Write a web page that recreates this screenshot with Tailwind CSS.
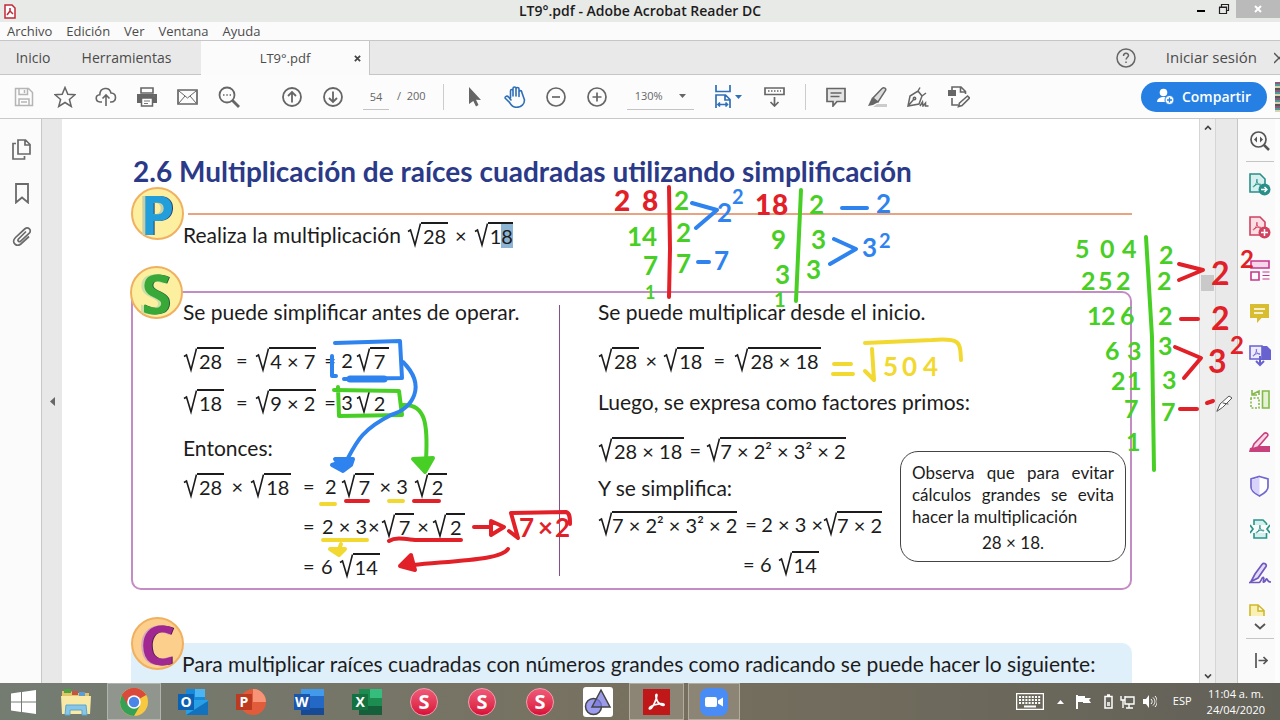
<!DOCTYPE html>
<html lang="es">
<head>
<meta charset="utf-8">
<title>LT9°.pdf - Adobe Acrobat Reader DC</title>
<script src="https://cdn.jsdelivr.net/npm/@tailwindcss/browser@4"></script>
</head>
<body class="h-screen overflow-hidden bg-[#fbfbfb] font-['Open_Sans','Noto_Sans',sans-serif] text-[#4b4b4b]">
<svg class="hidden">
  <symbol id="rad" viewBox="0 0 14 26"><path d="M1 9.500l2.500-1.500L8 23 13.500 1.500" fill="none" stroke="#1c1c1c" stroke-width="1.600"/></symbol>
  <symbol id="pdfa" viewBox="0 0 12 12"><path d="M6 1.500C5 1.500 6 5 7 6.500S10.500 9 10.800 8 5 7 2 9.500C.5 11 2.500 11.500 4 8.500S6.800 1.500 6 1.500z" fill="none" stroke="currentColor" stroke-width="1.100"/></symbol>
</svg>

<div class="relative flex h-screen flex-col">
  <header class="shrink-0">
    <div class="flex h-[22px] items-center bg-[#e8eae8]">
      <div class="flex w-[89px] pl-1">
        <svg class="h-[15px] w-3 text-[#c22838]" viewBox="0 0 12 15" fill="none" stroke="currentColor"><path d="M1 1h7l3 3v10H1z" fill="#fff" stroke-width="1.500"/><path d="M6 4v3l3 3M6 7l-3 4" stroke-width="1.500"/></svg>
      </div>
      <h1 class="flex-1 text-center text-[14px] font-semibold leading-[22px] text-[#1c1c1c]">LT9°.pdf - Adobe Acrobat Reader DC</h1>
      <div class="flex w-[89px] items-start self-stretch">
        <button aria-label="Minimizar" class="flex h-[18px] w-5 items-center justify-center"><span class="mt-1 h-[2px] w-2 bg-black"></span></button>
        <button aria-label="Restaurar" class="flex h-[18px] w-[25px] items-center justify-center"><svg class="size-3" viewBox="0 0 12 12" fill="none" stroke="#222"><path d="M1.500 4.500h7v6h-7zM3.500 4V1.500h7v6H9M1 4h8" stroke-width="1.200"/></svg></button>
        <button aria-label="Cerrar" class="flex h-[18px] flex-1 items-center justify-center bg-[#b9bab9]"><svg class="size-2" viewBox="0 0 8 8" stroke="#fff" stroke-width="2"><path d="M1 1l6 6M7 1L1 7"/></svg></button>
      </div>
    </div>
    <nav class="flex h-[18px] items-center gap-[14px] bg-[#fbfbfb] pl-[7px] text-[13px] leading-[18px]">
      <a href="#">Archivo</a><a href="#">Edición</a><a href="#">Ver</a><a href="#">Ventana</a><a href="#">Ayuda</a>
    </nav>
    <div class="flex h-[35px] border-y border-[#c6c6c6] bg-[#e9e9e9] text-sm leading-[33px]">
      <a href="#" class="w-[66px] text-center">Inicio</a>
      <a href="#" class="w-[121px] text-center">Herramientas</a>
      <div class="ml-[14px] -mb-px flex w-[169px] items-center border-r border-[#c6c6c6] bg-[#fbfbfb] text-[13px]">
        <span class="flex-1 text-center">LT9°.pdf</span>
        <button aria-label="Cerrar pestaña" class="-ml-5 mr-1 flex size-4 items-center justify-center"><svg class="size-[7px]" viewBox="0 0 8 8" stroke="#444" stroke-width="2"><path d="M1 1l6 6M7 1L1 7"/></svg></button>
      </div>
      <div class="ml-auto flex items-center">
        <svg class="size-5" viewBox="0 0 20 20" fill="none" stroke="#666" stroke-width="1.500"><circle cx="10" cy="10" r="9"/><path d="M7.500 8c0-3.500 5-3.500 5-.5 0 1.500-2.400 2-2.400 4M10 13.500v1.500"/></svg>
        <a href="#" class="ml-[30px] mr-[17px] text-[15px]">Iniciar sesión</a>
        <svg class="h-3 w-[6px]" viewBox="0 0 6 12" stroke="#555" stroke-width="1.500"><path d="M0 1l6 6M0 11l6-6"/></svg>
      </div>
    </div>
    <div class="flex h-[44px] items-center border-b border-[#c9c9c9] bg-[#fcfcfc] pl-[3px] text-[#666]">
      <button aria-label="Guardar" class="flex w-[41px] justify-center text-[#b5b5b5]"><svg class="size-5" viewBox="0 0 20 20" fill="none" stroke="currentColor" stroke-width="1.500"><path d="M1.500 1.500h13l4 4v13h-17zM5 1.500v6h8.500v-6M10.500 3v3M5 18.500v-6.500h10v6.500M7 15h6"/></svg></button>
      <button aria-label="Destacar" class="flex w-[41px] justify-center"><svg class="size-[22px]" viewBox="0 0 22 22" fill="none" stroke="currentColor" stroke-width="1.500"><path d="M11 1.500l2.800 6.800 7.200.4-5.600 4.700 1.900 7.100L11 16.500l-6.300 4 1.900-7.100L1 8.700l7.200-.4z"/></svg></button>
      <button aria-label="Subir" class="flex w-[41px] justify-center"><svg class="size-[22px]" viewBox="0 0 22 22" fill="none" stroke="currentColor" stroke-width="1.600"><path d="M7 16H5C0 15.500 0 9 4.800 8.700 5 1 14.500.5 16 7c6 .2 6 8.700 0 9h-1M11 20V9M7.500 12.500L11 9l3.500 3.500"/></svg></button>
      <button aria-label="Imprimir" class="flex w-[41px] justify-center"><svg class="size-5" viewBox="0 0 20 20"><path d="M4 1h12v5H4z" fill="none" stroke="currentColor" stroke-width="1.600"/><path d="M0 7h20v9H0z" fill="currentColor"/><path d="M4.500 11h11v8h-11z" fill="#fff" stroke="currentColor" stroke-width="1.500"/><path d="M7 14h6M7 16.500h4M16 9h2" stroke="#777"/></svg></button>
      <button aria-label="Correo" class="flex w-[41px] justify-center"><svg class="h-4 w-[21px]" viewBox="0 0 21 16" fill="none" stroke="currentColor"><path d="M1 1h19v14H1z" stroke-width="1.700"/><path d="M2 2l8.500 7L19 2M2 14l6-7M19 14l-6-7"/></svg></button>
      <button aria-label="Buscar" class="flex w-[41px] justify-center"><svg class="size-[22px]" viewBox="0 0 22 22" fill="none" stroke="currentColor" stroke-width="1.800"><circle cx="9" cy="9" r="7.500"/><path d="M14.500 14.500l6.500 6.500" stroke-width="2.800"/><path d="M5 9h8" stroke-width="1.500" stroke-dasharray="1.500 1.800"/></svg></button>
      <button aria-label="Página anterior" class="ml-[22px] flex w-[41px] justify-center"><svg class="size-5" viewBox="0 0 20 20" fill="none" stroke="currentColor" stroke-width="1.800"><circle cx="10" cy="10" r="9"/><path d="M10 15.500V5M6 9l4-4 4 4"/></svg></button>
      <button aria-label="Página siguiente" class="flex w-[41px] justify-center"><svg class="size-5" viewBox="0 0 20 20" fill="none" stroke="currentColor" stroke-width="1.800"><circle cx="10" cy="10" r="9"/><path d="M10 4.500V15M6 11l4 4 4-4"/></svg></button>
      <input aria-label="Página" value="54" class="ml-[10px] h-[26px] w-[26px] border-b border-[#c4c4c4] text-center text-[11px]">
      <span class="ml-2 text-[11px]">/&nbsp; 200</span>
      <span class="ml-[17px] mr-[10px] h-[26px] w-px bg-[#ccc]"></span>
      <button aria-label="Seleccionar" class="flex w-[41px] justify-center"><svg class="h-5 w-[13px]" viewBox="0 0 13 20"><path d="M1 0l12 13-5-.3 2.500 5.300-2.500 1.500-2.700-5.500L1 17z" fill="currentColor"/></svg></button>
      <button aria-label="Mano" class="flex w-[41px] justify-center text-[#2f6fb8]"><svg class="size-[22px]" viewBox="0 0 22 22" fill="none" stroke="currentColor" stroke-width="1.600" stroke-linecap="round" stroke-linejoin="round"><path d="M6.500 12V5c0-2 2.500-2 2.500 0v5V2.500c0-2 3-2 3 0V10 3c0-2 3-2 3 0v7.500V6c0-1.800 2.700-1.800 2.700 0L20.500 14c0 4-3 7.300-8 7.300-4 0-5.500-2.300-7-5L1 12c0-2 2.300-2.500 3.500-1L7 14"/></svg></button>
      <button aria-label="Alejar" class="flex w-[41px] justify-center"><svg class="size-5" viewBox="0 0 20 20" fill="none" stroke="currentColor" stroke-width="1.700"><circle cx="10" cy="10" r="9"/><path d="M6 10h8"/></svg></button>
      <button aria-label="Acercar" class="flex w-[41px] justify-center"><svg class="size-5" viewBox="0 0 20 20" fill="none" stroke="currentColor" stroke-width="1.700"><circle cx="10" cy="10" r="9"/><path d="M5.500 10h9M10 5.500v9"/></svg></button>
      <div class="ml-[9px] flex h-[26px] w-[67px] items-center border-b border-[#c4c4c4] pl-[8px]">
        <select aria-label="Zoom" class="w-[44px] appearance-none text-[11px]"><option>130%</option></select>
        <svg class="h-1 w-[7px]" viewBox="0 0 7 4"><path d="M0 0h7L3.500 4z" fill="currentColor"/></svg>
      </div>
      <button aria-label="Ajustar" class="ml-5 flex items-center gap-[3px] text-[#2f6fb8]"><svg class="h-[23px] w-[18px]" viewBox="0 0 18 23" fill="none" stroke="currentColor" stroke-width="1.700"><path d="M2 0v6.500h14V0M2 23V10h9.500l4.500 4.500V23M11 10v5h5M4 19.500h9M6 17.500l-2 2 2 2M11.500 17.500l2 2-2 2"/></svg><svg class="h-1 w-[7px]" viewBox="0 0 7 4"><path d="M0 0h7L3.500 4z" fill="currentColor"/></svg></button>
      <button aria-label="Medir" class="ml-3 flex w-[41px] justify-center"><svg class="h-5 w-[21px]" viewBox="0 0 21 20" fill="none" stroke="currentColor" stroke-width="1.700"><path d="M1 1h19v6.500H1zM10.500 10v9M6.500 15l4 4 4-4"/><path d="M4 4h13" stroke-dasharray="1.500 1.500"/></svg></button>
      <span class="mx-[10px] h-[26px] w-px bg-[#ccc]"></span>
      <button aria-label="Comentar" class="flex w-[41px] justify-center"><svg class="size-5" viewBox="0 0 20 20" fill="#e4e4e4" stroke="currentColor" stroke-width="1.700"><path d="M1 1.500h18v13h-8L7 19v-4.500H1zM4.500 6h11M4.500 9.500h9"/></svg></button>
      <button aria-label="Resaltar" class="flex w-[41px] justify-center"><svg class="size-5" viewBox="0 0 20 20"><path d="M10 17h10v3H6z" fill="#ccc"/><path d="M15 1.500c2-1.500 4.500 0 3.500 2L11 15l-5-4z" fill="#ddd" stroke="currentColor" stroke-width="1.500"/><path d="M5 10.500l6.500 4.500L6 18l-5 1z" fill="currentColor"/></svg></button>
      <button aria-label="Firmar" class="flex w-[41px] justify-center"><svg class="h-5 w-[22px]" viewBox="0 0 22 20" fill="none" stroke="currentColor" stroke-width="1.500"><path d="M1 19L3 9l8-5 4 5-3 8zM1 19l6-7M11 4l2-3.500M15 9l4-3M13 19l2.500-4 .5 4 2.500-3v3h3"/><circle cx="7.500" cy="11.500" r="1.200"/></svg></button>
      <button aria-label="Editar" class="flex w-[41px] justify-center"><svg class="size-[22px]" viewBox="0 0 22 22" fill="none" stroke="currentColor" stroke-width="1.600"><path d="M4 4V1h9l4.500 4.500V8M12.500 1v5h5M4 12v7h6"/><path d="M0 4h8v6H0z" fill="currentColor" stroke="none"/><path d="M11.500 17l8-7 2 2-7.500 7.500-3.500 1z"/></svg></button>
      <button class="ml-auto mr-[8px] flex h-[30px] w-[126px] items-center justify-center gap-2 rounded-full bg-[#2680e3] text-sm font-semibold text-white"><svg class="size-[17px]" viewBox="0 0 17 17" fill="#fff"><circle cx="6.500" cy="4.500" r="3.800"/><path d="M0 14c0-3 2-4 5-5h3c1 .3 1 1 1 5z"/><circle cx="12.500" cy="12" r="4.500" stroke="#2680e3"/><path d="M10 12h5M12.500 9.500v5" stroke="#2680e3" stroke-width="1.300"/></svg>Compartir</button>
      <span class="h-[30px] w-[5px] bg-[repeating-linear-gradient(#8a5a7c_0_2px,#4f9a98_2px_4px,#d9d3b0_4px_6px,#555_6px_8px)]"></span>
    </div>
  </header>

  <main class="flex min-h-0 flex-1">
    <aside class="flex w-[42px] shrink-0 flex-col items-center gap-[21px] border-r border-[#c8c8c8] bg-[#fbfbfb] pl-[2px] pt-[19px] text-[#6a6a6a]">
      <button aria-label="Miniaturas" class="flex h-[23px] items-center"><svg class="h-[21px] w-[19px]" viewBox="0 0 19 21" fill="none" stroke="currentColor" stroke-width="1.700"><path d="M6 1h7.500l4.500 4.500V15H6zM13 1v5h5M4 4.500H1V20h11.500v-3"/></svg></button>
      <button aria-label="Marcadores" class="flex h-[23px] items-center"><svg class="h-[21px] w-[14px]" viewBox="0 0 14 21" fill="none" stroke="currentColor" stroke-width="1.800"><path d="M1 1h12v18.500l-6-5-6 5z"/></svg></button>
      <button aria-label="Adjuntos" class="flex h-[20px] items-center"><svg class="size-5" viewBox="0 0 20 20" fill="none" stroke="currentColor" stroke-width="1.700"><path d="M14 5.500l-7.500 7.500c-1.500 1.800.7 3.500 2.200 2.100L17 7.500c3.500-3.500-1-7.500-4.300-4.500L3.500 11.500c-5 5 1.200 10 5.300 6.500L17 10.500"/></svg></button>
    </aside>
    <div class="flex w-5 shrink-0 items-center justify-center bg-[#e8e8e8]"><svg class="h-[9px] w-[5px]" viewBox="0 0 5 9"><path d="M5 0v9L0 4.500z" fill="#666"/></svg></div>

    <article class="min-w-0 flex-1 overflow-hidden bg-white pl-[69px] pr-[67px] pt-[34px] font-['Lato',sans-serif] text-[20px] leading-9 text-[#1c1c1c]">
      <h2 class="whitespace-nowrap pl-[2px] text-[28px] font-bold leading-9 text-[#2b3a88]">2.6 Multiplicación de raíces cuadradas utilizando simplificación</h2>
      <section class="flex h-[76px] items-start">
        <div class="-mt-[2px] flex size-[53px] shrink-0 items-center justify-center rounded-full border-2 border-[#f0b060] bg-[#fcf0a0] font-['Noto_Sans',sans-serif] text-[54px] font-bold leading-none text-[#229fda] [text-shadow:-3px_0_0_#c9cfa5,1px_0_0_#27406a]">P</div>
        <div class="ml-1 mt-[24px] flex-1 border-t-2 border-[#e8a480] pt-[2px]">
          <p class="-ml-[5px] flex h-9 items-center whitespace-nowrap"><span class="text-[21px]">Realiza la multiplicación</span>
            <svg class="ml-[6px] h-[26px] w-[14px]"><use href="#rad"/></svg><span class="-mt-px border-t-2 border-[#1c1c1c] px-[2px] leading-6">28</span>
            <span class="mx-[7px]">×</span>
            <svg class="h-[26px] w-[14px]"><use href="#rad"/></svg><span class="-mt-px border-t-2 border-[#1c1c1c] pl-[2px] leading-6">1<span class="bg-[#8eb4d4]">8</span></span>
          </p>
        </div>
      </section>
      <section class="relative mt-[26px] flex h-[299px] rounded-[10px] border-2 border-[#c48cc4]">
        <div class="absolute -left-[3px] -top-[27px] flex size-[53px] items-center justify-center rounded-full border-2 border-[#f0b060] bg-[#fcf0a0] font-['Noto_Sans',sans-serif] text-[54px] font-bold leading-none text-[#38a838] [text-shadow:-3px_0_0_#c9dfa5,1px_0_0_#22603a]">S</div>
        <div class="w-[426px] shrink-0 pl-[50px] pt-px">
          <p class="h-9 whitespace-nowrap text-[21px]">Se puede simplificar antes de operar.</p>
          <div class="mt-3 flex h-9 items-center">
            <svg class="h-[26px] w-[14px]"><use href="#rad"/></svg><span class="-mt-px border-t-2 border-[#1c1c1c] px-[2px] leading-6">28</span>
            <span class="w-[31px] pl-1 text-center">=</span>
            <svg class="h-[26px] w-[14px]"><use href="#rad"/></svg><span class="-mt-px border-t-2 border-[#1c1c1c] px-px leading-6">4 × 7</span>
            <span class="w-[25px] pl-2">=</span><span class="mr-[3px]">2</span>
            <svg class="h-[26px] w-[14px]"><use href="#rad"/></svg><span class="-mt-px border-t-2 border-[#1c1c1c] px-1 leading-6">7</span>
          </div>
          <div class="mt-[6px] flex h-9 items-center">
            <svg class="h-[26px] w-[14px]"><use href="#rad"/></svg><span class="-mt-px border-t-2 border-[#1c1c1c] px-[2px] leading-6">18</span>
            <span class="w-[31px] pl-1 text-center">=</span>
            <svg class="h-[26px] w-[14px]"><use href="#rad"/></svg><span class="-mt-px border-t-2 border-[#1c1c1c] px-px leading-6">9 × 2</span>
            <span class="w-[25px] pl-2">=</span><span class="mr-[3px]">3</span>
            <svg class="h-[26px] w-[14px]"><use href="#rad"/></svg><span class="-mt-px border-t-2 border-[#1c1c1c] px-1 leading-6">2</span>
          </div>
          <p class="mt-[10px] h-9 text-[21px]">Entonces:</p>
          <div class="mt-[2px] flex h-9 items-center">
            <div class="flex w-[120px] items-center">
              <svg class="h-[26px] w-[14px]"><use href="#rad"/></svg><span class="-mt-px border-t-2 border-[#1c1c1c] px-[2px] leading-6">28</span>
              <span class="w-[26px] text-center">×</span>
              <svg class="h-[26px] w-[14px]"><use href="#rad"/></svg><span class="-mt-px border-t-2 border-[#1c1c1c] px-[2px] leading-6">18</span>
            </div>
            <span class="w-[22px]">=</span><span class="mr-1">2</span>
            <svg class="h-[26px] w-[14px]"><use href="#rad"/></svg><span class="-mt-px border-t-2 border-[#1c1c1c] px-1 leading-6">7</span>
            <span class="w-[22px] text-center">×</span><span class="mr-[6px]">3</span>
            <svg class="h-[26px] w-[14px]"><use href="#rad"/></svg><span class="-mt-px border-t-2 border-[#1c1c1c] px-1 leading-6">2</span>
          </div>
          <div class="mt-1 flex h-9 items-center pl-[120px]">
            <span class="w-[19px]">=</span><span>2 × 3</span><span class="px-px">×</span>
            <svg class="h-[26px] w-[14px]"><use href="#rad"/></svg><span class="-mt-px border-t-2 border-[#1c1c1c] px-1 leading-6">7</span>
            <span class="px-[3px]">×</span>
            <svg class="h-[26px] w-[14px]"><use href="#rad"/></svg><span class="-mt-px border-t-2 border-[#1c1c1c] px-1 leading-6">2</span>
          </div>
          <div class="mt-1 flex h-9 items-center pl-[120px]">
            <span class="w-[18px]">=</span><span class="mr-[6px]">6</span>
            <svg class="h-[26px] w-[14px]"><use href="#rad"/></svg><span class="-mt-px border-t-2 border-[#1c1c1c] px-[2px] leading-6">14</span>
          </div>
        </div>
        <div class="my-3 w-px shrink-0 bg-[#84508c]"></div>
        <div class="min-w-0 flex-1 pl-[38px] pt-px">
          <p class="h-9 whitespace-nowrap text-[21px]">Se puede multiplicar desde el inicio.</p>
          <div class="mt-3 flex h-9 items-center">
            <svg class="h-[26px] w-[14px]"><use href="#rad"/></svg><span class="-mt-px border-t-2 border-[#1c1c1c] px-[2px] leading-6">28</span>
            <span class="w-[24px] text-center">×</span>
            <svg class="h-[26px] w-[14px]"><use href="#rad"/></svg><span class="-mt-px border-t-2 border-[#1c1c1c] px-[2px] leading-6">18</span>
            <span class="w-[30px] text-center">=</span>
            <svg class="h-[26px] w-[14px]"><use href="#rad"/></svg><span class="-mt-px border-t-2 border-[#1c1c1c] px-[2px] leading-6">28 × 18</span>
          </div>
          <p class="mt-[6px] h-9 whitespace-nowrap text-[21px]">Luego, se expresa como factores primos:</p>
          <div class="flex justify-between pr-1">
            <div class="shrink-0">
              <div class="mt-3 flex h-9 items-center">
                <svg class="h-[26px] w-[14px]"><use href="#rad"/></svg><span class="-mt-px border-t-2 border-[#1c1c1c] px-[2px] leading-6">28 × 18</span>
                <span class="w-[22px] text-center">=</span>
                <svg class="h-[26px] w-[14px]"><use href="#rad"/></svg><span class="-mt-px border-t-2 border-[#1c1c1c] leading-6">7 × 2² × 3² × 2</span>
              </div>
              <p class="mt-[2px] h-9 text-[21px]">Y se simplifica:</p>
              <div class="flex h-9 items-center">
                <svg class="h-[26px] w-[14px]"><use href="#rad"/></svg><span class="-mt-px border-t-2 border-[#1c1c1c] leading-6">7 × 2² × 3² × 2</span>
                <span class="w-[24px] pl-2">=</span><span>2 × 3 ×</span>
                <svg class="h-[26px] w-[14px]"><use href="#rad"/></svg><span class="-mt-px border-t-2 border-[#1c1c1c] leading-6">7 × 2</span>
              </div>
              <div class="mt-1 flex h-9 items-center pl-[145px]">
                <span class="w-[17px]">=</span><span class="mr-[6px]">6</span>
                <svg class="h-[26px] w-[14px]"><use href="#rad"/></svg><span class="-mt-px border-t-2 border-[#1c1c1c] px-[2px] leading-6">14</span>
              </div>
            </div>
            <aside class="mt-[31px] h-[111px] w-[226px] shrink-0 rounded-[18px] border border-[#444] px-[11px] pt-[10px] text-[17px] leading-[22px]">
              <p class="text-justify">Observa que para evitar cálculos grandes se evita hacer la multiplicación</p>
              <p class="mt-1 text-center">28 × 18.</p>
            </aside>
          </div>
        </div>
      </section>
      <section class="relative mt-[53px] h-[60px] rounded-t-[10px] bg-[#e0f0fb] pl-[51px] pt-[3px]">
        <div class="absolute -top-[26px] left-0 flex size-[53px] items-center justify-center rounded-full border-2 border-[#f0b060] bg-[#fccf8c] font-['Noto_Sans',sans-serif] text-[54px] font-bold leading-none text-[#a02890] [text-shadow:-2px_0_0_#d8a8b8,1px_0_0_#501850]">C</div>
        <p class="whitespace-nowrap text-[21px]">Para multiplicar raíces cuadradas con números grandes como radicando se puede hacer lo siguiente:</p>
      </section>
    </article>

    <div class="flex w-[17px] shrink-0 flex-col items-center justify-between border-x border-[#d5d5d5] bg-[#efefef] pb-1 pt-[6px]">
      <svg class="h-[5px] w-2" viewBox="0 0 8 5" fill="none" stroke="#444" stroke-width="1.700"><path d="M1 4.500l3-3 3 3"/></svg>
      <span class="mb-[238px] h-4 w-[13px] bg-[#c9c9c9]"></span>
      <svg class="h-[5px] w-2" viewBox="0 0 8 5" fill="none" stroke="#444" stroke-width="1.700"><path d="M1 .5l3 3 3-3"/></svg>
    </div>
    <div class="w-[21px] shrink-0 bg-[#e9e9e9]"></div>
    <aside class="flex w-[38px] shrink-0 flex-col items-center border-l border-[#c6c6c6] bg-[#fafafa] pl-[6px] pt-[12px]">
      <button aria-label="Buscar herramientas" class="text-[#555]"><svg class="size-5" viewBox="0 0 20 20" fill="none" stroke="currentColor" stroke-width="1.700"><circle cx="8.500" cy="8.500" r="7.500"/><path d="M14 14l5 5" stroke-width="2.500"/><path d="M7 5.500v6L4 8.500zM10 5.500v6l3-3z" fill="currentColor" stroke="none"/></svg></button>
      <span class="mt-[10px] h-px w-7 bg-[#c5c5c5]"></span>
      <button aria-label="Exportar PDF" class="mt-[11px] text-[#2a8f88]"><svg class="h-[23px] w-[22px]" viewBox="0 0 22 23"><path d="M1 1h10l5 5v13H1z" fill="#d5f0ee" stroke="currentColor" stroke-width="1.600"/><use href="#pdfa" x="3" y="5" width="10" height="10"/><circle cx="15.500" cy="16.500" r="6" fill="currentColor"/><path d="M12 16.500h6M15.500 14l2.500 2.500-2.500 2.500" fill="none" stroke="#fff" stroke-width="1.400"/></svg></button>
      <button aria-label="Crear PDF" class="mt-5 text-[#d0425f]"><svg class="h-[23px] w-[22px]" viewBox="0 0 22 23"><path d="M1 1h10l5 5v13H1z" fill="#fbdfe4" stroke="currentColor" stroke-width="1.600"/><use href="#pdfa" x="3" y="5" width="10" height="10"/><circle cx="15.500" cy="16.500" r="6" fill="currentColor"/><path d="M12 16.500h7M15.500 13v7" stroke="#fff" stroke-width="1.500"/></svg></button>
      <button aria-label="Editar PDF" class="mt-[21px] text-[#c8378c]"><svg class="h-[21px] w-5" viewBox="0 0 20 21" fill="none" stroke="currentColor" stroke-width="1.600"><path d="M1 1h18v7H1z" fill="#f6d7ea"/><path d="M1 12h8v8H1z"/><path d="M12.500 12h7M12.500 15.500h7M12.500 19h7" stroke-width="1"/></svg></button>
      <button aria-label="Comentario" class="mt-[23px]"><svg class="size-[19px]" viewBox="0 0 19 19"><path d="M0 0h19v14h-7.500L7 19v-5H0z" fill="#d8bd30"/><path d="M4 5h11M4 9h9" stroke="#fff" stroke-width="1.500"/></svg></button>
      <button aria-label="Combinar archivos" class="mt-[22px] text-[#6862d0]"><svg class="size-[22px]" viewBox="0 0 22 22"><path d="M11 1h7l4 4v10H11z" fill="currentColor"/><path d="M1 1h12v13H1z" fill="#eeeaff" stroke="currentColor" stroke-width="1.600"/><use href="#pdfa" x="3" y="3" width="9" height="9"/><path d="M11 11v9M7 16l4 4 4-4" fill="none" stroke="currentColor" stroke-width="2"/></svg></button>
      <button aria-label="Organizar páginas" class="mt-[22px] text-[#84b94a]"><svg class="size-5" viewBox="0 0 20 20" fill="none" stroke="currentColor" stroke-width="1.600"><path d="M12.500 2H19v17h-6.500z" fill="#e3f2d2"/><path d="M1 9v10h8V9z" stroke-dasharray="2 1.500"/><path d="M9 6V2L3 5M2 1v5h5"/></svg></button>
      <button aria-label="Censurar" class="mt-[23px] text-[#c8407c]"><svg class="h-5 w-[21px]" viewBox="0 0 21 20"><path d="M10 14h11v6H0l1-4z" fill="currentColor"/><path d="M15 1.500c2-1.500 5 .5 3.500 2.500L9 15l-6 2 2-5z" fill="#f6d7ea" stroke="currentColor" stroke-width="1.600"/></svg></button>
      <button aria-label="Proteger" class="mt-[23px] text-[#7068d0]"><svg class="h-[22px] w-[19px]" viewBox="0 0 19 22"><path d="M9.500 1.500L18 4v8c0 4.500-5 7-8.500 9C6 19 1 16.500 1 12V4z" fill="#fff" stroke="currentColor" stroke-width="1.700"/><path d="M9.500 2.500v17.500C6 18 2 16 2 12V5z" fill="#d7d3fa"/></svg></button>
      <button aria-label="Optimizar" class="mt-[22px] text-[#2a9488]"><svg class="size-5" viewBox="0 0 20 20"><path d="M4 6V1h9l3.500 3.500V6M4 14v5h12.500v-5" fill="#d5f0ee" stroke="currentColor" stroke-width="1.600"/><path d="M0 6l3 4-3 4M20 6l-3 4 3 4" fill="none" stroke="currentColor" stroke-width="1.700"/><use href="#pdfa" x="5" y="5" width="10" height="10"/></svg></button>
      <button aria-label="Rellenar y firmar" class="mt-[23px] text-[#7058c0]"><svg class="size-[22px]" viewBox="0 0 22 22" fill="none" stroke="currentColor" stroke-width="1.700"><path d="M13 2.500c2-2.500 5 0 4 2L9 16l-7 3.500L6 12z" fill="#e3dcf8"/><path d="M0 20.500h10c2 0 3-6 4.500-5S13 21 15 20s2-4 3-3 0 3 4 3"/></svg></button>
      <button aria-label="Más herramientas" class="mt-5 text-[#d0b828]"><svg class="-ml-[5px] h-3 w-4" viewBox="0 0 16 12"><path d="M1 12V1h8l6 5.500V12M9 1v6h6" fill="#f8f0b5" stroke="currentColor" stroke-width="1.600"/></svg></button>
      <svg class="mt-[7px] h-[7px] w-3 shrink-0" viewBox="0 0 12 7" fill="none" stroke="#555" stroke-width="1.800"><path d="M1 1l5 4.500L11 1"/></svg>
      <span class="mt-2 h-px w-7 shrink-0 bg-[#c5c5c5]"></span>
      <button aria-label="Contraer panel" class="mt-[14px]"><svg class="ml-1 h-[15px] w-[13px]" viewBox="0 0 13 15" fill="none" stroke="#555" stroke-width="1.700"><path d="M1 0v15M3.500 7.500H12M8.500 4L12 7.500 8.500 11"/></svg></button>
    </aside>
    <div class="w-[5px] shrink-0 bg-[#fdfdfd]"></div>
  </main>

  <footer class="flex h-[37px] shrink-0 items-stretch bg-gradient-to-r from-[#747c72] via-[#77705f] to-[#626158] text-white">
    <button aria-label="Inicio de Windows" class="flex w-[47px] items-center pl-[11px]"><svg class="h-6 w-[25px]" viewBox="0 0 25 24" fill="#fff"><path d="M0 3.500L10 2v9.500H0zM11 2l14-2v11.500H11zM0 12.500h10V22L0 20.500zM11 12.500h14V24l-14-2z"/></svg></button>
    <button aria-label="Explorador" class="flex w-[58px] items-center justify-center"><svg class="h-7 w-[30px]" viewBox="0 0 30 28"><path d="M1 3h9l2 2h16v21H1z" fill="#e2c566"/><path d="M3 1h7v4H3z" fill="#4ba43f"/><path d="M11 3h6v4h-6z" fill="#c75142"/><path d="M18 4h6v4h-6z" fill="#5a9bd8"/><path d="M0 8h30l-1 18H1z" fill="#f8e9a4"/><path d="M4 27l1-10h20l1 10h-5v-5H9v5z" fill="#87c6e8" stroke="#5ba6d2"/></svg></button>
    <button aria-label="Chrome" class="flex w-[58px] items-center justify-center"><span class="flex h-full w-[54px] items-center justify-center border border-[#b0b4ad] bg-[#90968e]"><svg class="size-7" viewBox="0 0 28 28"><circle cx="14" cy="14" r="14" fill="#f8c940"/><path d="M14 14L1.900 7A14 14 0 0 1 26.100 7z" fill="#d94a3c"/><path d="M14 14L1.900 7A14 14 0 0 0 14 28l6-10.500z" fill="#35a156"/><path d="M14 7h12.100A14 14 0 0 0 1.900 7L8 17.500z" fill="#d94a3c"/><circle cx="14" cy="14" r="6.800" fill="#fff"/><circle cx="14" cy="14" r="5.200" fill="#4a86e8"/></svg></span></button>
    <button aria-label="Outlook" class="flex w-[58px] items-center justify-center"><svg class="h-7 w-[31px]" viewBox="0 0 31 28"><path d="M9 1h19v22H9z" fill="#1689d8"/><path d="M18 1h10v8H18z" fill="#4ab5f0"/><path d="M9 12l22 0v15H9z" fill="#28a0e5"/><path d="M9 27l22-14v14z" fill="#1272bd"/><path d="M1 6h16v16H1z" fill="#0b62b5"/><text x="3.500" y="19" font-size="14" font-weight="700" fill="#fff">O</text></svg></button>
    <button aria-label="PowerPoint" class="flex w-[58px] items-center justify-center"><svg class="h-7 w-[31px]" viewBox="0 0 31 28"><circle cx="18" cy="14" r="13" fill="#e05c3a"/><path d="M18 1a13 13 0 0 1 13 13H18z" fill="#f79478"/><path d="M1 6h16v16H1z" fill="#bc3b20"/><text x="4.500" y="19" font-size="14" font-weight="700" fill="#fff">P</text></svg></button>
    <button aria-label="Word" class="flex w-[58px] items-center justify-center"><svg class="h-7 w-[31px]" viewBox="0 0 31 28"><path d="M8 1h23v26H8z" fill="#2368c4"/><path d="M8 1h23v7H8z" fill="#419bea"/><path d="M8 20h23v7H8z" fill="#174a94"/><path d="M1 6h16v16H1z" fill="#1b56ae"/><text x="2" y="19" font-size="14" font-weight="700" fill="#fff">W</text></svg></button>
    <button aria-label="Excel" class="flex w-[58px] items-center justify-center"><svg class="h-7 w-[31px]" viewBox="0 0 31 28"><path d="M8 1h23v26H8z" fill="#1d8c50"/><path d="M19 1h12v9H19z" fill="#34bd7c"/><path d="M8 18h23v9H8z" fill="#15603a"/><path d="M1 6h16v16H1z" fill="#137240"/><text x="4.500" y="19" font-size="14" font-weight="700" fill="#fff">X</text></svg></button>
    <button aria-label="S 1" class="flex w-[58px] items-center justify-center"><span class="flex size-7 items-center justify-center rounded-full border border-[#f0a0b0] bg-gradient-to-b from-[#f05878] to-[#d80838] font-['Noto_Sans',sans-serif] text-xl font-bold leading-none">S</span></button>
    <button aria-label="S 2" class="flex w-[58px] items-center justify-center"><span class="flex size-7 items-center justify-center rounded-full border border-[#f0a0b0] bg-gradient-to-b from-[#f05878] to-[#d80838] font-['Noto_Sans',sans-serif] text-xl font-bold leading-none">S</span></button>
    <button aria-label="S 3" class="flex w-[58px] items-center justify-center"><span class="flex size-7 items-center justify-center rounded-full border border-[#f0a0b0] bg-gradient-to-b from-[#f05878] to-[#d80838] font-['Noto_Sans',sans-serif] text-xl font-bold leading-none">S</span></button>
    <button aria-label="GeoGebra" class="flex w-[58px] items-center justify-center"><svg class="size-[30px]" viewBox="0 0 30 30"><rect width="30" height="30" rx="3" fill="#fff"/><circle cx="10.500" cy="19.500" r="8" fill="#9c9cf0" stroke="#444" stroke-width="1.500"/><path d="M18 3l9 17H9z" fill="#7a7ae0" fill-opacity=".75" stroke="#444" stroke-width="1.500"/></svg></button>
    <button aria-label="Acrobat" class="flex w-[58px] items-center justify-center"><span class="flex h-full w-[55px] items-center justify-center border border-[#b2ac9e] bg-[#8c8576]"><svg class="h-[26px] w-[27px]" viewBox="0 0 27 26"><path d="M0 0h27v26H0z" fill="#c01818"/><use href="#pdfa" x="4" y="3" width="19" height="19"/></svg></span></button>
    <button aria-label="Zoom" class="flex w-[58px] items-center justify-center"><span class="flex h-full w-[52px] items-center justify-center border border-[#b2ac9e] bg-[#8c8576]"><svg class="size-7" viewBox="0 0 28 28"><rect width="28" height="28" rx="8" fill="#4a8cf6"/><rect x="5" y="9" width="12" height="10" rx="2" fill="#fff"/><path d="M18 12.500l5-3v9l-5-3z" fill="#fff"/></svg></span></button>
    <div class="ml-auto flex items-center text-xs">
      <svg class="mr-[13px] h-[17px] w-[28px]" viewBox="0 0 28 17" fill="none" stroke="#fff"><path d="M.5.5h27v16H.5z" stroke-width="1.500"/><path d="M3 4h22M3 7h22M3 10h22" stroke-width="2" stroke-dasharray="2 1.200"/><path d="M8 13.500h12" stroke-width="2"/></svg>
      <svg class="mr-3 h-1 w-[7px]" viewBox="0 0 7 4"><path d="M0 4h7L3.500 0z" fill="#fff"/></svg>
      <svg class="mr-[13px] h-[14px] w-[15px]" viewBox="0 0 15 14" fill="#fff"><path d="M0 0h2v14H0zM2 1h7v2h6l-2 2 2 3H7V7H2z"/></svg>
      <svg class="mr-[7px] h-[15px] w-[9px]" viewBox="0 0 9 15" fill="none" stroke="#fff" stroke-width="1.500"><path d="M1 2.500h7V14H1zM3 1h3M3 11h3M3 9h3"/></svg>
      <svg class="mr-[8px] h-[14px] w-[15px]" viewBox="0 0 15 14" fill="none" stroke="#fff" stroke-width="1.400"><path d="M5 2h9v7H5zM9 9v4M6 13h7M1 1v4h4V1M3 5v8"/></svg>
      <svg class="mr-4 h-[13px] w-[14px]" viewBox="0 0 14 13" fill="none" stroke="#fff"><path d="M0 4h3l3-4v13L3 9H0z" fill="#fff" stroke="none"/><path d="M8 4c1.500 1.500 1.500 3.500 0 5M10 2.500c2.500 2.500 2.500 5.500 0 8M12 1c3 3.500 3 7.500 0 11"/></svg>
      <span class="mr-[15px] text-[11px]">ESP</span>
      <p class="mr-[15px] text-center text-[11px] leading-4">11:04 a. m.<br>24/04/2020</p>
    </div>
  </footer>

  <svg class="pointer-events-none absolute inset-0 h-full w-full font-['Lato',sans-serif] text-[26px] font-bold" fill="none" stroke-width="4" stroke-linecap="round" stroke-linejoin="round">
    <g stroke="#e12028">
      <path d="M669 187l1 62-1 48"/>
      <path d="M346 501h22M414 501h25M389 541c7-4 16-2 26-1h46M474 527h16M491 521l13 6-13 8z"/>
      <path d="M509 531l9 7-7-25 55-1c4 1 4 6 4 12M508 549c-6 10-42 11-95 16"/>
      <path d="M400 566l11-11 4 15z" fill="#e12028"/>
      <path d="M1179 264l24 6-24 10M1181 319h17M1175 347l26 11-17 20M1180 409h17M1207 403l6-2"/>
    </g>
    <g stroke="#48cf25">
      <path d="M801 190l-5 111"/><path d="M1146 237l6 100 2 133"/>
      <path d="M334 390l65 1 3 24-63 1-1-29M402 405c24-2 26 20 24 55"/>
      <path d="M413 459l20-1-8 14z" fill="#48cf25"/>
    </g>
    <g stroke="#2e83ef">
      <path d="M335 343l65-2 2 37-58 1M332 356v20h4"/><path d="M350 379h34" stroke-width="7"/><path d="M403 362c24 24 10 46-12 53-28 14-34 26-43 43"/>
      <path d="M332 465l6-2-3-4 18 0-2 6-8 6z" fill="#2e83ef"/>
      <path d="M692 203l25 7-21 18M698 262h11M842 208h25M834 239l22 10-26 15"/>
    </g>
    <g stroke="#f2d931"><path d="M321 504h14M389 501h14M323 540h44"/><path d="M341 544l-3 8M330 549l9 6 6-6z" fill="#f2d931"/><path d="M834 364h17M833 374h20M865 343l67-3c28-2 28 1 29 20M865 371l9 9-2-31"/></g>
    <g stroke="none" fill="#e12028">
      <g class="text-[28px] font-black"><text x="614 642" y="211">28</text><text x="755 772" y="215">18</text></g><text x="519 538 555" y="537">7×2</text>
      <g class="text-[32px]"><text x="1211" y="285">2</text><text x="1211" y="330">2</text><text x="1208" y="373">3</text></g>
      <g class="text-[24px]"><text x="1240" y="268">2</text><text x="1230" y="354">2</text></g>
    </g>
    <g stroke="none" fill="#48cf25">
      <text x="674" y="210">2</text><text x="627 642" y="246">14</text><text x="676" y="242">2</text><text x="643" y="275">7</text><text x="676" y="273">7</text><text x="645" y="299" class="text-[18px]">1</text>
      <text x="809" y="214">2</text><text x="771" y="249">9</text><text x="811" y="249">3</text><text x="775" y="284">3</text><text x="806" y="279">3</text><text x="774" y="307" class="text-[20px]">1</text>
      <g class="text-[25px]">
        <text x="1075 1100 1122" y="258">504</text><text x="1159" y="264">2</text><text x="1081 1098 1116" y="290">252</text><text x="1157" y="290">2</text><text x="1087 1101 1120" y="325">126</text><text x="1158" y="325">2</text><text x="1105 1127" y="360">63</text><text x="1158" y="355">3</text><text x="1111 1127" y="390">21</text><text x="1162" y="389">3</text><text x="1124" y="418">7</text><text x="1161" y="421">7</text><text x="1126" y="451">1</text>
      </g>
    </g>
    <g stroke="none" fill="#2e83ef"><text x="717" y="222">2</text><text x="732" y="204" class="text-[20px]">2</text><text x="714" y="270">7</text><text x="876" y="213">2</text><text x="862" y="257">3</text><text x="879" y="248" class="text-[20px]">2</text></g>
    <text x="883 902 923" y="376" stroke="none" fill="#f2d931">504</text>
    <path d="M1217 411l3-7 9-8 3 2-9 9zM1223 403l5 1" stroke="#555" stroke-width="1" fill="#fff"/>
  </svg>
</div>
</body>
</html>
